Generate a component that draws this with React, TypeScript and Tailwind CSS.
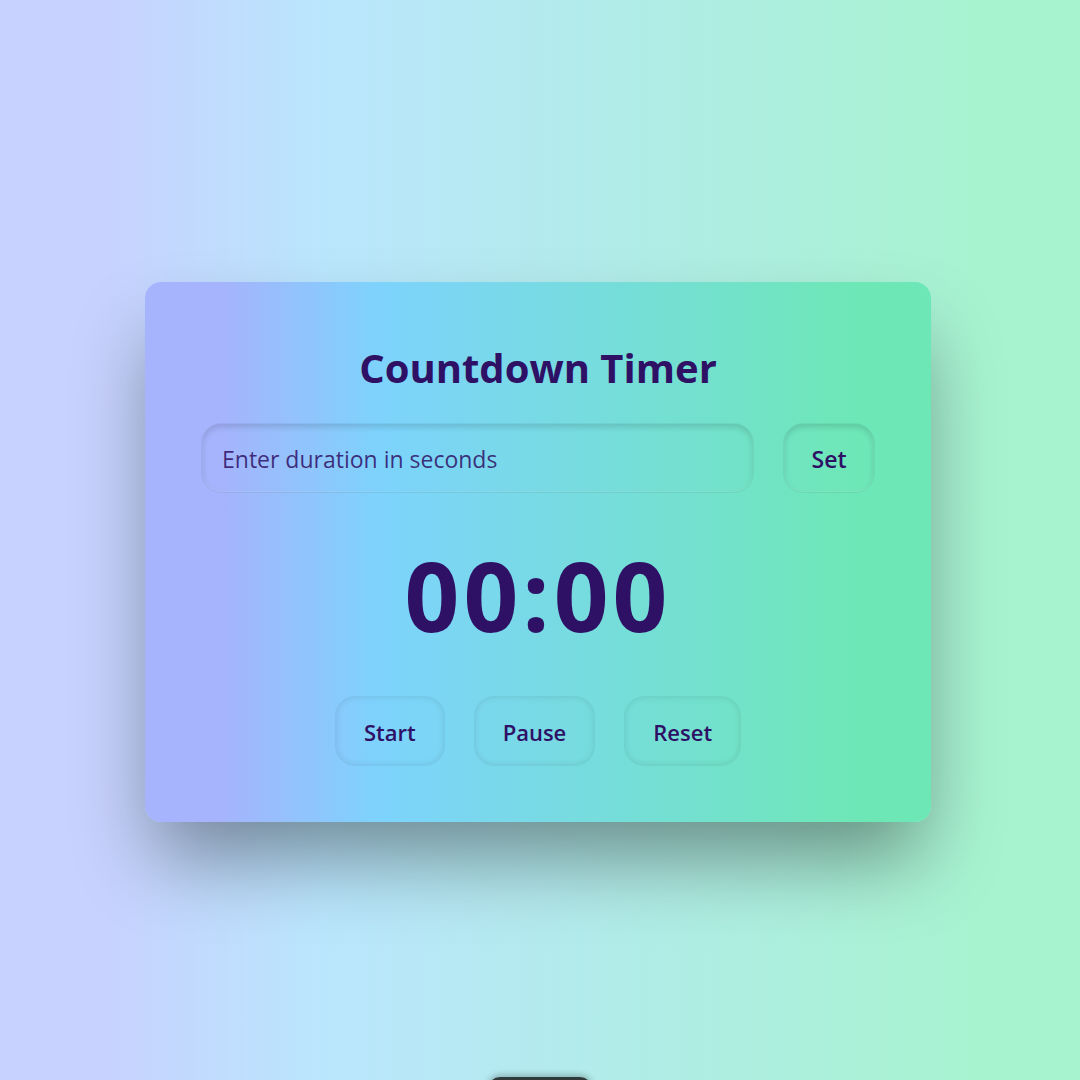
import { useState } from 'react';

const formatTime = (total: number) => {
  const m = Math.floor(total / 60);
  const s = total % 60;
  return `${String(m).padStart(2, '0')}:${String(s).padStart(2, '0')}`;
};

export default function App() {
  const [duration, setDuration] = useState('');
  const [remaining] = useState(0);

  const controls = ['Start', 'Pause', 'Reset'];

  return (
    <div
      className="h-screen overflow-hidden flex flex-col items-center bg-[linear-gradient(to_right,#c7d2fe_10%,#bae6fd_30%,#a7f3d0_90%)] text-[#2e1065]"
      style={{ fontFamily: '"Open Sans", "Noto Sans", sans-serif' }}
    >
      {/* Timer card */}
      <div className="mt-[282px] mr-[4px] shrink-0 w-[786px] h-[540px] rounded-2xl p-14 flex flex-col items-center bg-[linear-gradient(to_right,#a5b4fc_10%,#7dd3fc_30%,#6ee7b7_90%)] shadow-[0_45px_80px_-10px_rgba(0,0,0,0.4)]">
        <h1 className="text-[40px] leading-[60px] font-bold">Countdown Timer</h1>

        <div className="mt-[25px] w-full flex gap-[29px]">
          <input
            value={duration}
            onChange={(e) => setDuration(e.target.value)}
            placeholder="Enter duration in seconds"
            className="flex-1 h-[70px] rounded-[20px] px-5 pt-[2px] text-[23px] bg-transparent border border-black/5 outline-none placeholder:text-[#2e1065]/85 shadow-[inset_0_3px_6px_rgba(0,0,0,0.14),inset_0_-1px_2px_rgba(255,255,255,0.15)]"
          />
          <button className="w-[92px] h-[70px] rounded-[20px] pt-[2px] text-[23px] font-semibold border border-black/5 shadow-[inset_0_3px_6px_rgba(0,0,0,0.14),inset_0_-1px_2px_rgba(255,255,255,0.15)]">
            Set
          </button>
        </div>

        <div className="flex-1 flex items-center justify-center">
          <span className="text-[96px] leading-none font-bold tracking-[4px]">{formatTime(remaining)}</span>
        </div>

        <div className="flex gap-[29px]">
          {controls.map((label) => (
            <button
              key={label}
              className="h-[70px] px-7 pt-[3px] rounded-[20px] text-[22px] font-semibold border border-black/5 shadow-[inset_0_0_6px_rgba(0,0,0,0.1)]"
            >
              {label}
            </button>
          ))}
        </div>
      </div>

      {/* Floating element cut off at the bottom */}
      <div className="mt-[255px] w-[104px] h-[40px] shrink-0 rounded-xl bg-[#2f3a3a] shadow-[0_-2px_6px_rgba(0,0,0,0.25)]" />
    </div>
  );
}
